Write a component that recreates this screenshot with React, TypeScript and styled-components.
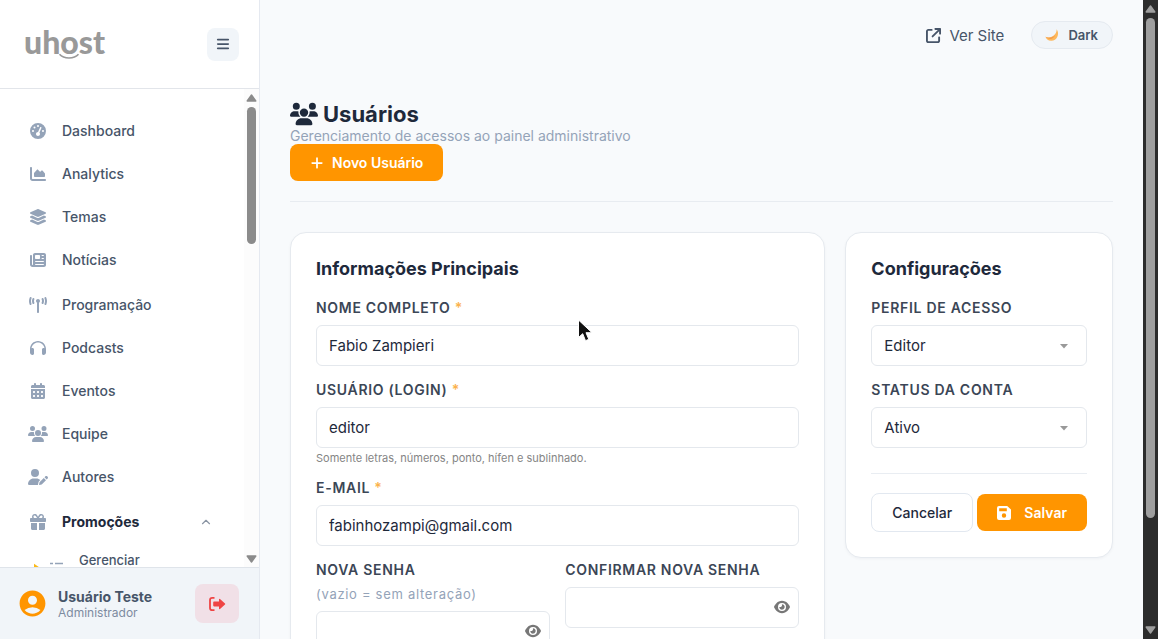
import React from 'react';
import styled, { createGlobalStyle, css } from 'styled-components';
import {
  FaArrowUpRightFromSquare, FaBars, FaCalendarDays, FaChartArea, FaEye, FaGaugeHigh, FaGift,
  FaHeadphones, FaLayerGroup, FaNewspaper, FaPlus, FaTowerBroadcast, FaUserPen, FaUsers,
} from 'react-icons/fa6';
import { MdAccountCircle } from 'react-icons/md';
import { ChevronUp } from 'lucide-react';

const Global = createGlobalStyle`
  *, *::before, *::after { box-sizing: border-box; }
  body {
    margin: 0;
    overflow: hidden;
    background: #f8fafc;
    color: #1e293b;
    font-family: Inter, "Liberation Sans", sans-serif;
    font-size: 15px;
  }
  button, input, select { font: inherit; color: inherit; }
  button { cursor: pointer; }
  h1, h2, p, ul { margin: 0; padding: 0; }
  ul { list-style: none; }
`;

const Shell = styled.div`
  display: grid;
  grid-template-columns: 260px minmax(0, 1fr) 15px;
  height: 100vh;
`;

/* Sidebar */
const Sidebar = styled.aside`
  display: flex;
  flex-direction: column;
  min-height: 0;
  background: #fff;
  border-right: 1px solid #e5e9f0;
`;
const Brand = styled.div`
  display: flex;
  flex: none;
  align-items: center;
  justify-content: space-between;
  height: 89px;
  padding: 0 20px 0 24px;
  border-bottom: 1px solid #e2e5ea;
`;
const Logo = styled.a`
  position: relative;
  padding-bottom: 5px;
  color: #999;
  font-family: Lato, sans-serif;
  font-size: 32px;
  font-weight: 900;
  line-height: 34px;
  text-decoration: none;
`;
const Smile = styled.svg`
  position: absolute;
  left: 34px;
  bottom: 4px;
`;
const MenuButton = styled.button`
  display: grid;
  place-items: center;
  width: 32px;
  height: 33px;
  padding: 0;
  border: 0;
  border-radius: 8px;
  background: #f1f5f9;
  color: #475569;
`;
const NavArea = styled.div`
  display: flex;
  flex: 1;
  min-height: 0;
`;
const Nav = styled.nav`
  display: flex;
  flex: 1;
  flex-direction: column;
  gap: 2px;
  overflow: hidden;
  padding: 20px 20px 0;
`;
const NavLink = styled.a<{ $open?: boolean }>`
  display: flex;
  align-items: center;
  height: 43px;
  padding: 0 11px 0 8px;
  color: ${p => (p.$open ? '#1e293b' : '#475569')};
  font-size: 14px;
  font-weight: ${p => (p.$open ? 700 : 500)};
  text-decoration: none;
  > span { flex: 1; }
`;
const NavIcon = styled.i`
  display: flex;
  margin-right: 14px;
  color: #94a3b8;
  svg { width: 20px; height: 16px; }
`;
const SubLink = styled.a`
  display: flex;
  align-items: flex-start;
  padding: 8px 0 0 12px;
  color: #475569;
  font-size: 13px;
  font-weight: 500;
  line-height: 14px;
  text-decoration: none;
  svg { flex: none; margin: 6px 15px 0 0; }
`;
const UserBar = styled.footer`
  display: flex;
  flex: none;
  align-items: center;
  height: 72px;
  padding: 0 20px 0 17px;
  border-top: 1px solid #dfe4ea;
  background: #f1f5f9;
  > svg { margin-right: 10px; color: #ff9500; }
`;
const UserText = styled.div`
  flex: 1;
  strong { display: block; color: #475569; font-size: 14px; font-weight: 700; line-height: 17px; }
  span { display: block; color: #7d8ba0; font-size: 12px; line-height: 15px; }
`;
const LogoutButton = styled.button`
  display: grid;
  place-items: center;
  width: 44px;
  height: 39px;
  padding: 0;
  border: 0;
  border-radius: 8px;
  background: #f1e0e7;
  color: #ef4444;
`;

/* Scroll bars */
const Bar = styled.div<{ $dark?: boolean }>`
  display: flex;
  flex: none;
  flex-direction: column;
  align-items: center;
  width: 15px;
  padding: ${p => (p.$dark ? '5px 0' : '5px 0 4px')};
  background: ${p => (p.$dark ? '#2c2c2c' : '#fcfcfc')};
  color: ${p => (p.$dark ? '#9f9f9f' : '#8b8b8b')};
`;
const Track = styled.div`
  flex: 1;
  width: 9px;
  margin: 5px 0;
`;
const Thumb = styled.div<{ $share: number }>`
  height: ${p => p.$share}%;
  border-radius: 5px;
  background: currentColor;
`;

/* Main area */
const Main = styled.main`
  min-width: 0;
  overflow: hidden;
  padding: 0 30px 30px;
`;
const TopBar = styled.div`
  display: flex;
  align-items: center;
  justify-content: flex-end;
  gap: 27px;
  height: 70px;
`;
const SiteLink = styled.a`
  display: flex;
  align-items: center;
  gap: 8px;
  color: #475569;
  text-decoration: none;
`;
const ThemeButton = styled.button`
  display: flex;
  align-items: center;
  gap: 8px;
  height: 28px;
  padding: 0 14px 0 12px;
  border: 1px solid #e5eaf0;
  border-radius: 14px;
  background: #f1f5f9;
  color: #475569;
  font-size: 13px;
  font-weight: 600;
`;
const PageHead = styled.header`
  margin: 30px 0;
  padding-bottom: 20px;
  border-bottom: 1px solid #e8ecf1;
  h1 {
    display: flex;
    align-items: center;
    gap: 5px;
    font-size: 22px;
    font-weight: 700;
    line-height: 28px;
  }
  p { color: #94a3b8; font-size: 14px; line-height: 16px; }
`;
const buttonBase = css`
  display: inline-flex;
  align-items: center;
  justify-content: center;
  height: 37px;
  border-radius: 8px;
  font-size: 14px;
`;
const PrimaryButton = styled.button<{ $gap: number }>`
  ${buttonBase}
  gap: ${p => p.$gap}px;
  padding: 0 20px;
  border: 0;
  background: #ff9500;
  color: #fff;
  font-weight: 600;
`;
const PlainButton = styled.button`
  ${buttonBase}
  height: 39px;
  padding: 0 20px;
  border: 1px solid #e2e8f0;
  background: #fff;
  font-weight: 500;
`;
const Columns = styled.div`
  display: grid;
  grid-template-columns: minmax(0, 2fr) minmax(0, 1fr);
  align-items: start;
  gap: 20px;
`;
const Card = styled.section`
  padding: 25px;
  border: 1px solid #e6eaef;
  border-radius: 16px;
  background: #fff;
  box-shadow: 0 1px 3px rgba(15, 23, 42, 0.04);
  h2 { margin-bottom: 16px; font-size: 18px; font-weight: 700; line-height: 22px; }
`;
const Field = styled.div<{ $hinted?: boolean }>`
  margin-bottom: ${p => (p.$hinted ? 10 : 12)}px;
  label {
    display: block;
    margin-bottom: 5px;
    color: #3b4656;
    font-size: 14px;
    font-weight: 600;
    letter-spacing: 0.05em;
    line-height: 24px;
  }
  em { color: #fbb24c; font-style: normal; }
  small { display: block; color: #94a3b8; font-size: 13px; font-weight: 400; }
`;
const Control = styled.div`
  position: relative;
  display: flex;
  input, select {
    width: 100%;
    height: 41px;
    padding: 0 12px;
    border: 1px solid #e4e8ed;
    border-radius: 6px;
    outline: 0;
    background: #fff;
    appearance: none;
  }
  > svg { position: absolute; top: 17px; right: 18px; pointer-events: none; }
`;
const EyeButton = styled.button`
  position: absolute;
  top: 12px;
  right: 9px;
  display: flex;
  padding: 0;
  border: 0;
  background: none;
  color: #777;
`;
const Hint = styled.p`
  margin-top: 2px;
  color: #858585;
  font-size: 11px;
  line-height: 16px;
`;
const Pair = styled.div`
  display: grid;
  grid-template-columns: 1fr 1fr;
  gap: 15px;
`;
const Actions = styled.div`
  display: flex;
  align-items: center;
  justify-content: space-between;
  margin-top: 25px;
  padding-top: 19px;
  border-top: 1px solid #e9edf2;
`;
const Pointer = styled.svg`
  position: fixed;
  top: 319px;
  left: 577px;
  pointer-events: none;
`;

const groups = [
  [
    { icon: FaGaugeHigh, text: 'Dashboard' },
    { icon: FaChartArea, text: 'Analytics' },
    { icon: FaLayerGroup, text: 'Temas' },
    { icon: FaNewspaper, text: 'Notícias' },
  ],
  [
    { icon: FaTowerBroadcast, text: 'Programação' },
    { icon: FaHeadphones, text: 'Podcasts' },
    { icon: FaCalendarDays, text: 'Eventos' },
    { icon: FaUsers, text: 'Equipe' },
    { icon: FaUserPen, text: 'Autores' },
  ],
  [{ icon: FaGift, text: 'Promoções', open: true }],
];

const Arrow = ({ down }: { down?: boolean }) => (
  <svg width="11" height="8" viewBox="0 0 11 8" aria-hidden="true">
    <path
      d={down ? 'M1.2 1h8.6L5.5 7z' : 'M1.2 7h8.6L5.5 1z'}
      fill="currentColor" stroke="currentColor" strokeWidth="1.4" strokeLinejoin="round"
    />
  </svg>
);

const ScrollBar = ({ share, dark }: { share: number; dark?: boolean }) => (
  <Bar $dark={dark} aria-hidden="true">
    <Arrow />
    <Track><Thumb $share={share} /></Track>
    <Arrow down />
  </Bar>
);

const TextField = ({ id, label, value, hint }: { id: string; label: string; value: string; hint?: string }) => (
  <Field $hinted={!!hint}>
    <label htmlFor={id}>{label} <em>*</em></label>
    <Control><input id={id} defaultValue={value} /></Control>
    {hint && <Hint>{hint}</Hint>}
  </Field>
);

const PasswordField = ({ id, label, note }: { id: string; label: string; note?: string }) => (
  <Field>
    <label htmlFor={id}>{label}{note && <small>{note}</small>}</label>
    <Control>
      <input id={id} type="password" />
      <EyeButton type="button" aria-label="Mostrar senha"><FaEye size={16} /></EyeButton>
    </Control>
  </Field>
);

const SelectField = ({ id, label, options }: { id: string; label: string; options: string[] }) => (
  <Field>
    <label htmlFor={id}>{label}</label>
    <Control>
      <select id={id}>{options.map(o => <option key={o}>{o}</option>)}</select>
      <svg width="10" height="8" viewBox="0 0 10 8"><path d="M1 2h8L5 6.4z" fill="#999" /></svg>
    </Control>
  </Field>
);

export default function App() {
  return (
    <>
      <Global />
      <Shell>
        <Sidebar>
          <Brand>
            <Logo href="#">
              uhost
              <Smile width="22" height="7" viewBox="0 0 22 7" aria-hidden="true">
                <path d="M1.5 1.2C6 6.2 16 6.2 20.5 1.2" fill="none" stroke="#999" strokeWidth="1.6" />
              </Smile>
            </Logo>
            <MenuButton aria-label="Menu"><FaBars size={14} /></MenuButton>
          </Brand>
          <NavArea>
            <Nav>
              {groups.map((items, i) => (
                <ul key={i}>
                  {items.map(({ icon: Icon, text, open }: any) => (
                    <li key={text}>
                      <NavLink href="#" $open={open}>
                        <NavIcon><Icon /></NavIcon>
                        <span>{text}</span>
                        {open && <ChevronUp size={14} color="#8a94a3" />}
                      </NavLink>
                    </li>
                  ))}
                </ul>
              ))}
              <SubLink href="#">
                <svg width="32" height="16" viewBox="0 0 32 16" aria-hidden="true">
                  <path d="M2 4.800l6 4-6 4z" fill="#fbb917" />
                  <path d="M18 4.500h3M23 4.500h8M18 10h3M23 10h8" stroke="#94a3b8" strokeWidth="1.6" />
                </svg>
                <span>Gerenciar</span>
              </SubLink>
            </Nav>
            <ScrollBar share={31} />
          </NavArea>
          <UserBar>
            <MdAccountCircle size={31} />
            <UserText>
              <strong>Usuário Teste</strong>
              <span>Administrador</span>
            </UserText>
            <LogoutButton aria-label="Sair">
              <svg width="18" height="16" viewBox="0 0 18 16">
                <path d="M6.5 1.8H4.2Q2 1.8 2 4v8q0 2.2 2.2 2.2h2.3" fill="none" stroke="currentColor" strokeWidth="1.8" />
                <path d="M6 5.600h5V3.200q.2-.8 1-.3l5 4.500q.5.6 0 1.200l-5 4.500q-.8.5-1-.3V10.400H6q-.8 0-.8-.8V6.400Q5.200 5.600 6 5.600z" fill="currentColor" />
              </svg>
            </LogoutButton>
          </UserBar>
        </Sidebar>

        <Main>
          <TopBar>
            <SiteLink href="#"><FaArrowUpRightFromSquare size={15} />Ver Site</SiteLink>
            <ThemeButton type="button">
              <svg width="16" height="16" viewBox="0 0 16 16" aria-hidden="true">
                <path d="M12.700 2.200C16 7 13 13.800 7.200 13.800 4 13.800 2 12 1.500 9.800 5 11.600 12.500 9.500 12.700 2.200z" fill="#fdb85c" />
                <path d="M1.500 9.800C5 11.600 9 10.800 11 8c-1 4-5.500 5.500-9.500 1.800z" fill="#f39a4a" />
              </svg>
              Dark
            </ThemeButton>
          </TopBar>

          <PageHead>
            <h1><FaUsers size={28} />Usuários</h1>
            <p>Gerenciamento de acessos ao painel administrativo</p>
            <PrimaryButton type="button" $gap={8}><FaPlus size={14} />Novo Usuário</PrimaryButton>
          </PageHead>

          <Columns>
            <Card>
              <h2>Informações Principais</h2>
              <TextField id="nome" label="NOME COMPLETO" value="Fabio Zampieri" />
              <TextField
                id="login" label="USUÁRIO (LOGIN)" value="editor"
                hint="Somente letras, números, ponto, hífen e sublinhado."
              />
              <TextField id="email" label="E-MAIL" value="fabinhozampi@gmail.com" />
              <Pair>
                <PasswordField id="senha" label="NOVA SENHA" note="(vazio = sem alteração)" />
                <PasswordField id="confirmar" label="CONFIRMAR NOVA SENHA" />
              </Pair>
            </Card>

            <Card>
              <h2>Configurações</h2>
              <SelectField id="perfil" label="PERFIL DE ACESSO" options={['Editor', 'Administrador']} />
              <SelectField id="status" label="STATUS DA CONTA" options={['Ativo', 'Inativo']} />
              <Actions>
                <PlainButton type="button">Cancelar</PlainButton>
                <PrimaryButton type="submit" $gap={13}>
                  <svg width="14" height="14" viewBox="0 0 14 14" aria-hidden="true">
                    <path
                      fillRule="evenodd" fill="currentColor"
                      d="M2 0h8.200L14 3.600V12q0 2-2 2H2q-2 0-2-2V2Q0 0 2 0zM2.200 2.300v3h7.600v-3zM7 7.300a2.200 2.200 0 1 0 0 4.400 2.200 2.200 0 0 0 0-4.400z"
                    />
                  </svg>
                  Salvar
                </PrimaryButton>
              </Actions>
            </Card>
          </Columns>
        </Main>

        <ScrollBar share={83} dark />
      </Shell>
      <Pointer width="18" height="24" viewBox="0 0 18 24" aria-hidden="true">
        <path d="M1.500 1v17.500l4.200-3.800 2.800 7 3.300-1.400-2.800-6.600h6z" fill="#111" stroke="#fff" strokeWidth="1" />
      </Pointer>
    </>
  );
}
